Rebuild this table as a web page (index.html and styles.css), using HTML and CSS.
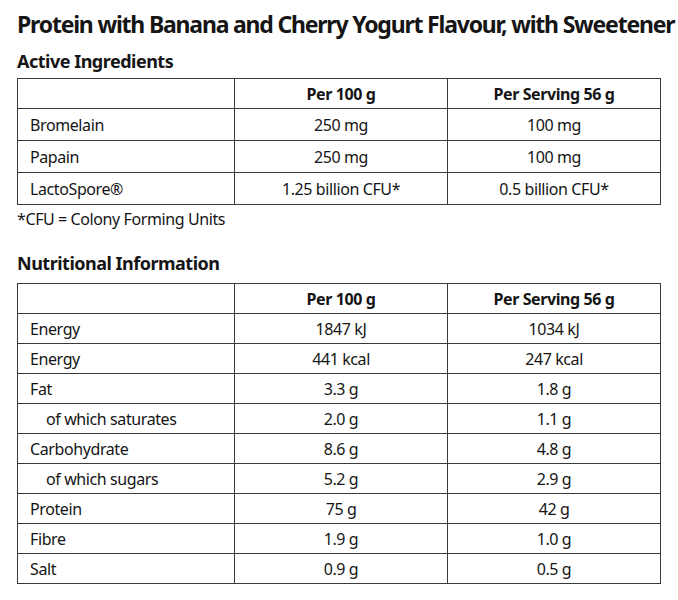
FILE: index.html
```html
<!DOCTYPE html>
<html lang="en">
<head>
<meta charset="utf-8">
<title>Protein with Banana and Cherry Yogurt Flavour</title>
<link rel="stylesheet" href="styles.css">
</head>
<body>
<main class="page">
  <h1 class="title">Protein with Banana and Cherry Yogurt Flavour, with Sweetener</h1>

  <h2 class="section-title">Active Ingredients</h2>
  <table class="facts facts--active">
    <thead>
      <tr><th></th><th>Per 100 g</th><th>Per Serving 56 g</th></tr>
    </thead>
    <tbody>
      <tr><td>Bromelain</td><td>250 mg</td><td>100 mg</td></tr>
      <tr><td>Papain</td><td>250 mg</td><td>100 mg</td></tr>
      <tr><td>LactoSpore®</td><td>1.25 billion CFU*</td><td>0.5 billion CFU*</td></tr>
    </tbody>
  </table>
  <p class="footnote">*CFU = Colony Forming Units</p>

  <h2 class="section-title section-title--second">Nutritional Information</h2>
  <table class="facts facts--nutrition">
    <thead>
      <tr><th></th><th>Per 100 g</th><th>Per Serving 56 g</th></tr>
    </thead>
    <tbody>
      <tr><td>Energy</td><td>1847 kJ</td><td>1034 kJ</td></tr>
      <tr><td>Energy</td><td>441 kcal</td><td>247 kcal</td></tr>
      <tr><td>Fat</td><td>3.3 g</td><td>1.8 g</td></tr>
      <tr><td class="sub">of which saturates</td><td>2.0 g</td><td>1.1 g</td></tr>
      <tr><td>Carbohydrate</td><td>8.6 g</td><td>4.8 g</td></tr>
      <tr><td class="sub">of which sugars</td><td>5.2 g</td><td>2.9 g</td></tr>
      <tr><td>Protein</td><td>75 g</td><td>42 g</td></tr>
      <tr><td>Fibre</td><td>1.9 g</td><td>1.0 g</td></tr>
      <tr><td>Salt</td><td>0.9 g</td><td>0.5 g</td></tr>
    </tbody>
  </table>
</main>
</body>
</html>
```

FILE: styles.css
```css
html, body {
  margin: 0;
  padding: 0;
  background: #ffffff;
}

body {
  font-family: "Noto Sans", "Open Sans", sans-serif;
  color: #151515;
}

.page {
  padding: 9px 17px 0 17px;
}

.title {
  margin: 0;
  font-size: 23px;
  line-height: 30px;
  font-weight: 700;
  letter-spacing: -1.2px;
  white-space: nowrap;
}

.section-title {
  margin: 10px 0 5px 0;
  font-size: 18px;
  line-height: 24px;
  font-weight: 700;
  letter-spacing: -0.5px;
}

.section-title--second {
  margin: 20px 0 8px 0;
}

.facts {
  width: 644px;
  border-collapse: collapse;
  table-layout: fixed;
  font-size: 16px;
  letter-spacing: -0.4px;
}

.facts th,
.facts td {
  border: 1px solid #3a3a3a;
  padding: 0 12px;
  text-align: center;
  vertical-align: middle;
}

.facts th {
  font-weight: 700;
}

.facts th:first-child,
.facts td:first-child {
  width: 192px;
  text-align: left;
}

.facts thead tr {
  height: 30px;
}

.facts--active tbody tr {
  height: 32px;
}

.facts--nutrition tbody tr {
  height: 30px;
}

.facts td.sub {
  padding-left: 28px;
}

.footnote {
  margin: 2px 0 0 0;
  font-size: 16px;
  line-height: 24px;
  letter-spacing: -0.4px;
}
```
